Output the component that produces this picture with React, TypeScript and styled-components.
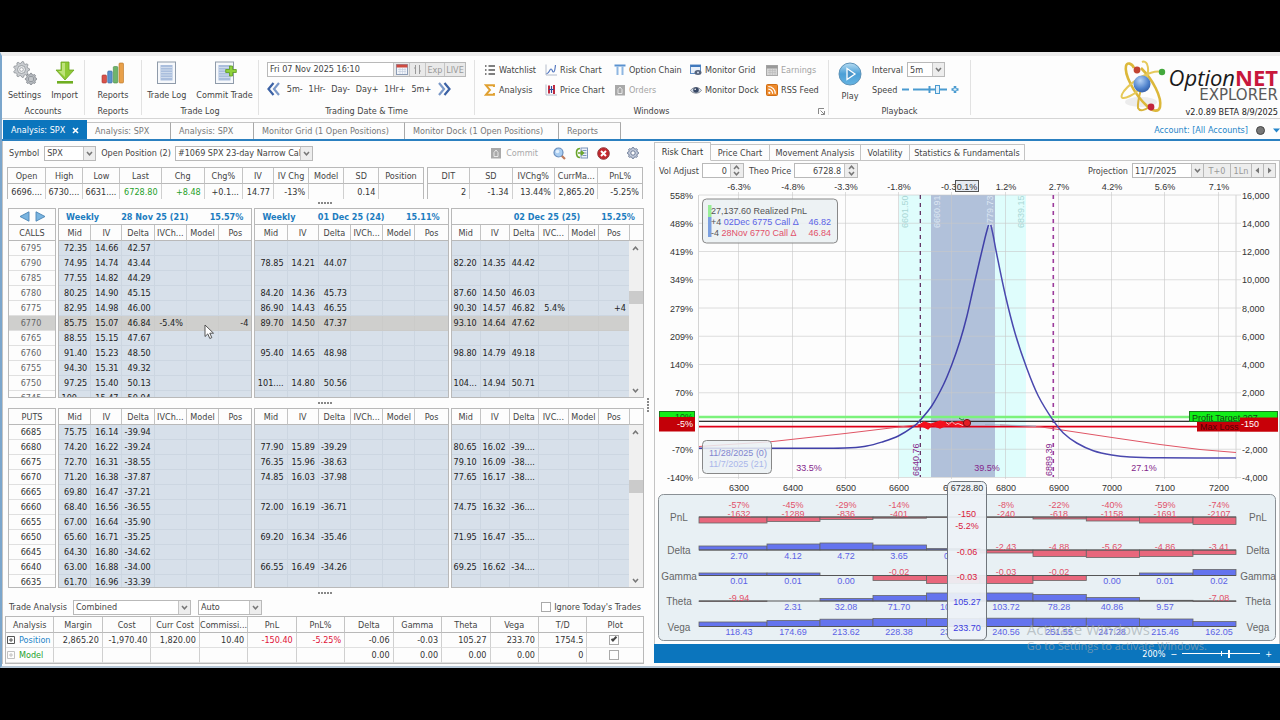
import React from "react";
import styled, { createGlobalStyle, css } from "styled-components";

const GlobalStyle = createGlobalStyle`
  *, *::before, *::after { box-sizing: border-box; }
  html, body { margin: 0; padding: 0; background: #000; }
  body, button, input, select, table {
    font-family: "DejaVu Sans Condensed", "DejaVu Sans", sans-serif;
    font-size: 9px;
    line-height: 14px;
    color: #444;
  }
  button { border: 0; padding: 0; margin: 0; background: none; cursor: default; }
  svg { display: block; flex: none; }
  a { text-decoration: none; }
`;

const LINE = "#b9b9b9";
const BLUE = "#0b75bd";

/* ---------- window frame ---------- */

const Screen = styled.div`
  min-height: 100vh;
  padding: 52px 0;
  background: #000;
`;

const Window = styled.div`
  background: #fdfdfd;
  border-left: 2px solid #7ba6cc;
  border-top: 4px solid #ececec;
  border-bottom: 2px solid #b5c6d6;
  padding-bottom: 2px;
  overflow: hidden;
`;

/* ---------- ribbon ---------- */

const Ribbon = styled.header`
  display: flex;
  align-items: stretch;
  height: 63px;
  padding: 4px 0 3px;
  border-bottom: 1px solid #d5d5d5;
`;

const RibbonGroup = styled.section<{ $w: number }>`
  display: flex;
  flex-direction: column;
  justify-content: space-between;
  flex: 0 1 ${(p) => p.$w}px;
  border-right: 1px solid #e2e2e2;
  position: relative;
`;

const GroupCaption = styled.div`
  text-align: center;
  line-height: 12px;
  height: 10px;
`;

const BigButtons = styled.div`
  display: flex;
  justify-content: center;
  gap: 10px;
  padding-top: 1px;
`;

const BigButton = styled.button`
  display: flex;
  flex-direction: column;
  align-items: center;
  gap: 4px;
  white-space: nowrap;
  line-height: 12px;
`;

const DateArea = styled.div`
  padding: 2px 8px 0 8px;
`;

const DateRow = styled.div`
  display: flex;
  height: 15px;
  width: 199px;
  border: 1px solid ${LINE};
`;

const DateInput = styled.input`
  flex: 1;
  min-width: 0;
  border: 0;
  padding: 0 2px;
  background: #fff;
  line-height: 13px;
  outline: none;
`;

const DateButton = styled.button<{ $w: number }>`
  width: ${(p) => p.$w}px;
  display: flex;
  align-items: center;
  justify-content: center;
  border-left: 1px solid #c4c4c4;
  background: #e9e9e9;
  color: #999;
`;

const StepRow = styled.div`
  display: flex;
  align-items: center;
  justify-content: space-between;
  width: 184px;
  margin-top: 5px;
`;

const StepButton = styled.button`
  white-space: nowrap;
`;

const WindowGrid = styled.div`
  display: grid;
  grid-template-columns: 61px 69px 76px 76px 1fr;
  row-gap: 6px;
  padding: 3px 0 0 9px;
`;

const WindowButton = styled.button`
  display: flex;
  align-items: center;
  gap: 3px;
  white-space: nowrap;
  &:disabled { color: #a4a4a4; }
`;

const Launcher = styled.button`
  position: absolute;
  right: 3px;
  bottom: 0;
`;

const PlaybackRow = styled.div`
  display: flex;
  gap: 10px;
  padding: 2px 0 0 9px;
`;

const PlaybackFields = styled.div`
  display: flex;
  flex-direction: column;
  gap: 5px;
`;

const FieldRow = styled.div`
  display: flex;
  align-items: center;
  gap: 4px;
  height: 15px;
`;

const SpeedTrack = styled.div`
  position: relative;
  width: 58px;
  height: 11px;
`;

const HiddenRange = styled.input`
  position: absolute;
  inset: 0;
  width: 100%;
  height: 100%;
  margin: 0;
  opacity: 0;
`;

const Brand = styled.div`
  margin-left: auto;
  display: flex;
  align-items: flex-start;
  gap: 2px;
  padding-right: 2px;
`;

const BrandText = styled.div`
  display: flex;
  flex-direction: column;
  align-items: flex-end;
`;

const BrandName = styled.div`
  font-family: "Open Sans", "Noto Sans", sans-serif;
  font-size: 22px;
  line-height: 26px;
  font-style: italic;
  color: #1a1a1a;
  padding-top: 4px;
  b { font-style: normal; color: #c8173c; }
`;

const BrandSub = styled.div`
  font-family: "DejaVu Sans", sans-serif;
  font-size: 15px;
  line-height: 11px;
  color: #5a5a5a;
`;

const BrandVersion = styled.div`
  font-size: 9px;
  line-height: 14px;
  padding-top: 4px;
  color: #222;
`;

/* ---------- document tabs ---------- */

const TabBar = styled.nav`
  display: flex;
  align-items: flex-end;
  height: 22px;
  padding-left: 1px;
  border-bottom: 2px solid #2b80c0;
`;

const DocTab = styled.button<{ $w: number; $active?: boolean }>`
  display: flex;
  align-items: center;
  justify-content: space-between;
  width: ${(p) => p.$w}px;
  height: 17px;
  padding: 0 7px 0 8px;
  border-top: 1px solid #c4c4c4;
  border-right: 1px solid #a8a8a8;
  color: #777;
  white-space: nowrap;
  ${(p) =>
    p.$active &&
    css`
      height: 19px;
      background: ${BLUE};
      border-color: ${BLUE};
      color: #fff;
    `}
`;

const Account = styled.div`
  margin-left: auto;
  height: 18px;
  display: flex;
  align-items: center;
  gap: 8px;
  a { color: #2585c9; }
`;

const StatusDot = styled.span`
  width: 9px;
  height: 9px;
  border-radius: 50%;
  background: #777;
  border: 1px solid #444;
`;

/* ---------- main split ---------- */

const Main = styled.main`
  display: grid;
  grid-template-columns: minmax(0, 652fr) minmax(0, 626fr);
`;

const LeftPane = styled.section`
  position: relative;
  border-left: 1px solid #c4c4c4;
  padding: 3px 10px 0 2px;
`;

const Bar = styled.div<{ $h: number }>`
  display: flex;
  align-items: center;
  height: ${(p) => p.$h}px;
  padding-left: 4px;
  white-space: nowrap;
`;

const Push = styled.div<{ $gap?: number }>`
  margin-left: auto;
  display: flex;
  align-items: center;
  gap: ${(p) => p.$gap ?? 9}px;
`;

const CommitButton = styled.button`
  display: flex;
  align-items: center;
  gap: 4px;
  margin-right: 6px;
  &:disabled { color: #aaa; }
`;

const GearButton = styled.button`
  margin: 0 5px 0 8px;
`;

const SelectBox = styled.span<{ $w: number; $ml?: number }>`
  position: relative;
  display: flex;
  width: ${(p) => p.$w}px;
  height: 15px;
  margin-left: ${(p) => p.$ml ?? 0}px;
  border: 1px solid ${LINE};
  background: #fff;
  select {
    appearance: none;
    flex: 1;
    min-width: 0;
    border: 0;
    padding: 0 12px 0 2px;
    background: transparent;
    line-height: 12px;
    outline: none;
  }
`;

const DropMark = styled.span`
  position: absolute;
  right: 0;
  top: 0;
  width: 12px;
  height: 13px;
  display: flex;
  align-items: center;
  justify-content: center;
  background: #ededed;
  border-left: 1px solid #c4c4c4;
  pointer-events: none;
`;

const Label = styled.label<{ $ml?: number }>`
  margin-left: ${(p) => p.$ml ?? 0}px;
  white-space: nowrap;
`;

const Grip = styled.div<{ $h: number }>`
  height: ${(p) => p.$h}px;
  display: flex;
  align-items: center;
  justify-content: center;
  gap: 1px;
  span { width: 2px; height: 2px; background: #888; }
`;

const SideGrip = styled.div`
  position: absolute;
  right: 5px;
  top: 257px;
  display: flex;
  flex-direction: column;
  gap: 1px;
  span { width: 2px; height: 2px; background: #888; }
`;

/* ---------- tables ---------- */

const Table = styled.table`
  width: 100%;
  table-layout: fixed;
  border-collapse: separate;
  border-spacing: 0;
`;

const Th = styled.th`
  height: 16px;
  padding: 0;
  font-weight: normal;
  text-align: center;
  border-right: 1px solid #c4c4c4;
  border-bottom: 1px solid ${LINE};
  background: #fdfdfd;
  white-space: nowrap;
  overflow: hidden;
  &:last-child { border-right: 0; }
`;

const Td = styled.td<{ $tone?: string; $line?: string; $center?: boolean }>`
  height: 15px;
  padding: 0 3px 0 1px;
  line-height: 14px;
  text-align: ${(p) => (p.$center ? "center" : "right")};
  color: ${(p) => p.$tone ?? "#333"};
  border-right: 1px solid ${(p) => p.$line ?? "#d0d0d0"};
  border-bottom: 1px solid ${(p) => p.$line ?? "#e0e0e0"};
  white-space: nowrap;
  overflow: hidden;
  &:last-child { border-right: 0; }
`;

const QuoteRow = styled.div`
  display: grid;
  grid-template-columns: minmax(0, 416fr) minmax(0, 216fr);
  gap: 3px;
  height: 31px;
  margin: 5px 1px 0 2px;
`;

const QuoteBox = styled.div`
  border: 1px solid ${LINE};
  border-bottom: 0;
  ${Td} { border-bottom: 0; }
`;

const ChainGrid = styled.div<{ $h: number }>`
  position: relative;
  display: grid;
  grid-template-columns: minmax(0, 48fr) minmax(0, 194fr) minmax(0, 194fr) minmax(0, 193fr);
  gap: 2px;
  height: ${(p) => p.$h}px;
  margin-left: 3px;
`;

const ChainBox = styled.div`
  border: 1px solid ${LINE};
  overflow: hidden;
`;

const ChainTitle = styled.div`
  display: flex;
  justify-content: space-between;
  align-items: center;
  height: 16px;
  padding: 0 8px 0 7px;
  border-bottom: 1px solid ${LINE};
  font-weight: bold;
  color: #1c7cc0;
  white-space: nowrap;
  span:first-child { min-width: 34px; }
`;

const ArrowPair = styled.div`
  display: flex;
  align-items: center;
  justify-content: center;
  gap: 5px;
  height: 16px;
  border-bottom: 1px solid ${LINE};
`;

const ChainBody = styled.div`
  display: flex;
  align-items: flex-start;
`;

const ChainRow = styled.tr<{ $hot?: boolean }>`
  background: ${(p) => (p.$hot ? "#cfcfcd" : "#d7e0ea")};
`;

const StrikeRow = styled.tr<{ $hot?: boolean }>`
  background: ${(p) => (p.$hot ? "#cfcfcd" : "#fdfdfd")};
`;

const ScrollColumn = styled.div`
  flex: 0 0 14px;
  display: flex;
  flex-direction: column;
`;

const ScrollHead = styled.div`
  height: 16px;
  border-left: 1px solid #c4c4c4;
  border-bottom: 1px solid ${LINE};
`;

const ScrollTrack = styled.div<{ $h: number }>`
  height: ${(p) => p.$h}px;
  display: flex;
  flex-direction: column;
  align-items: center;
  justify-content: space-between;
  padding: 5px 0 4px;
  background: #f0f0f0;
  position: relative;
`;

const ScrollThumb = styled.div<{ $top: number }>`
  position: absolute;
  left: 0;
  right: 0;
  top: ${(p) => p.$top}%;
  height: 13px;
  background: #cbcbcb;
`;

const PointerMark = styled.div`
  position: absolute;
  left: 196px;
  top: 116px;
`;

const CheckLabel = styled.label`
  display: flex;
  align-items: center;
  gap: 3px;
  margin-right: 3px;
`;

const Check = styled.input`
  appearance: none;
  display: block;
  width: 10px;
  height: 10px;
  margin: 0 auto;
  border: 1px solid #aaa;
  background: #fff;
  position: relative;
  &:checked::after {
    content: "";
    position: absolute;
    left: 1px;
    top: 1px;
    width: 6px;
    height: 3px;
    border-left: 2px solid #444;
    border-bottom: 2px solid #444;
    transform: rotate(-45deg);
  }
`;

const AnalysisBox = styled.div`
  border: 1px solid ${LINE};
`;

const NameCell = styled.span<{ $dim?: boolean }>`
  display: flex;
  align-items: center;
  gap: 4px;
  svg { opacity: ${(p) => (p.$dim ? 0.35 : 1)}; }
`;

/* ---------- right pane ---------- */

const RightPane = styled.section`
  position: relative;
  padding-top: 1px;
`;

const PaneTabs = styled.nav`
  display: flex;
  align-items: flex-end;
  height: 19px;
`;

const PaneTab = styled.button<{ $w: number; $active?: boolean }>`
  width: ${(p) => p.$w}px;
  height: ${(p) => (p.$active ? 19 : 17)}px;
  border: 1px solid #c4c4c4;
  border-left-width: ${(p) => (p.$active ? 1 : 0)}px;
  border-bottom-color: ${(p) => (p.$active ? "#fdfdfd" : "#c4c4c4")};
  background: #fdfdfd;
  color: ${(p) => (p.$active ? "#333" : "#444")};
  white-space: nowrap;
`;

const TabFill = styled.div`
  flex: 1;
  border-bottom: 1px solid #c4c4c4;
`;

const PaneBody = styled.div`
  border-left: 1px solid #c4c4c4;
  border-right: 1px solid #c4c4c4;
`;

const SpinBox = styled.span<{ $w: number; $ml: number }>`
  display: flex;
  width: ${(p) => p.$w}px;
  height: 15px;
  margin-left: ${(p) => p.$ml}px;
  border: 1px solid ${LINE};
  input {
    flex: 1;
    min-width: 0;
    border: 0;
    padding: 0 3px;
    text-align: right;
    line-height: 12px;
    background: #fff;
    outline: none;
  }
`;

const SpinButtons = styled.span`
  display: flex;
  flex-direction: column;
  justify-content: space-around;
  align-items: center;
  width: 13px;
  background: #ededed;
  border-left: 1px solid #c4c4c4;
`;

const ProjectionBox = styled.span`
  display: flex;
  margin-right: 3px;
`;

const SmallButton = styled.button<{ $w: number }>`
  display: flex;
  align-items: center;
  justify-content: center;
  width: ${(p) => p.$w}px;
  height: 15px;
  border: 1px solid ${LINE};
  border-left: 0;
  background: #ededed;
  color: #999;
`;

const Chart = styled.svg`
  width: 100%;
  height: auto;
  font-family: "Liberation Sans", Arial, sans-serif;
  font-size: 9px;
`;

const ZoomBar = styled.footer`
  display: flex;
  align-items: center;
  justify-content: flex-end;
  gap: 5px;
  height: 19px;
  padding-right: 8px;
  background: ${BLUE};
  color: #fff;
  button { color: #fff; }
`;

const ZoomRange = styled.input`
  appearance: none;
  width: 78px;
  height: 9px;
  margin: 0;
  background: linear-gradient(#fff, #fff) center / 100% 1px no-repeat,
    linear-gradient(#fff, #fff) center / 1px 5px no-repeat;
  &::-webkit-slider-thumb {
    appearance: none;
    width: 2px;
    height: 8px;
    background: #fff;
  }
`;

const Watermark = styled.div`
  position: absolute;
  right: 73px;
  bottom: 10px;
  font-family: "Open Sans", "Noto Sans", sans-serif;
  font-size: 11px;
  line-height: 16px;
  color: rgba(160, 170, 175, 0.65);
  pointer-events: none;
  strong { display: block; font-weight: normal; font-size: 15px; line-height: 17px; }
`;

/* ---------- icons ---------- */

const Chevron = ({ up = false }: { up?: boolean }) => (
  <svg width="7" height="5" viewBox="0 0 7 5" fill="none" stroke="#777" strokeWidth="1.5">
    <path d={up ? "M1 4 3.5 1.2 6 4" : "M1 1 3.5 3.8 6 1"} />
  </svg>
);

const gearPath = (cx: number, cy: number, r: number, n: number) => {
  const pts: string[] = [];
  for (let i = 0; i < n * 4; i++) {
    const a = ((i - 0.5) / (n * 4)) * Math.PI * 2;
    const rad = i % 4 < 2 ? r : r * 0.78;
    pts.push(`${(cx + Math.cos(a) * rad).toFixed(2)} ${(cy + Math.sin(a) * rad).toFixed(2)}`);
  }
  return `M${pts.join("L")}Z`;
};

const GearsIcon = () => (
  <svg width="24" height="24" viewBox="0 0 24 24">
    <path d={gearPath(8.5, 8.5, 8, 9)} fill="#c9ccd0" stroke="#8c9096" strokeWidth=".8" />
    <circle cx="8.5" cy="8.5" r="4" fill="#e6e8ea" stroke="#8c9096" strokeWidth=".8" />
    <circle cx="8.5" cy="8.5" r="1.8" fill="#fff" stroke="#8c9096" strokeWidth=".7" />
    <path d={gearPath(18, 18, 5.7, 8)} fill="#b9bdc2" stroke="#777c83" strokeWidth=".8" />
    <circle cx="18" cy="18" r="2.7" fill="#dcdfe2" stroke="#777c83" strokeWidth=".7" />
    <circle cx="18" cy="18" r="1.2" fill="#fff" stroke="#777c83" strokeWidth=".6" />
  </svg>
);

const ImportIcon = () => (
  <svg width="20" height="24" viewBox="0 0 20 24">
    <path d="M6 1h8v8h5l-9 10L1 9h5z" fill="#8fc936" stroke="#6ba31f" strokeWidth=".8" />
    <path d="M7 2h3v14L3.4 10H7z" fill="#bfe37b" />
    <rect x="2" y="20" width="16" height="2.6" fill="#6fae22" />
  </svg>
);

const BarsIcon = () => (
  <svg width="24" height="24" viewBox="0 0 24 24">
    <rect x="1" y="14" width="4.5" height="8" rx="1" fill="#d9534c" stroke="#a9322c" strokeWidth=".6" />
    <rect x="6.7" y="10" width="4.5" height="12" rx="1" fill="#5a93cf" stroke="#34659b" strokeWidth=".6" />
    <rect x="12.3" y="5.5" width="4.5" height="16.5" rx="1" fill="#6fb46c" stroke="#458a45" strokeWidth=".6" />
    <rect x="18" y="2" width="4.5" height="20" rx="1" fill="#e8a04a" stroke="#b87420" strokeWidth=".6" />
  </svg>
);

const LogIcon = ({ plus = false }: { plus?: boolean }) => (
  <svg width="24" height="24" viewBox="0 0 24 24">
    <rect x="2.5" y="1" width="18" height="21.5" fill="#f6f8fb" stroke="#8f9baa" />
    <rect x="5.5" y="4" width="12" height="15.5" fill="#aabedd" />
    <path d="M6 6.5h11M6 9h11M6 11.5h11M6 14h11M6 16.5h11" stroke="#d8e2f0" strokeWidth=".8" />
    {plus && (
      <path
        d="M16.5 5h3v3.500h3.800v3h-3.800V15h-3v-3.500h-3.800v-3h3.800z"
        fill="#8fd13c"
        stroke="#5c9c1c"
        strokeWidth=".8"
      />
    )}
  </svg>
);

const CalendarIcon = ({ muted = false }: { muted?: boolean }) => (
  <svg width="12" height="11" viewBox="0 0 12 11">
    <rect x=".5" y=".5" width="11" height="10" fill={muted ? "#d6d6d6" : "#f2f5fa"} stroke={muted ? "#aaa" : "#8d9db5"} />
    <rect x=".5" y=".5" width="11" height="3" fill={muted ? "#999" : "#cf4b40"} />
    <path d="M2 5.500h8M2 7.500h8M4 4v6M6.500 4v6M9 4v6" stroke={muted ? "#bbb" : "#c0cbdc"} strokeWidth=".6" />
  </svg>
);

const DoubleArrow = ({ right = false }: { right?: boolean }) => (
  <svg width="14" height="14" viewBox="0 0 14 14" fill="none" strokeWidth="2.200" transform={right ? "scale(-1 1)" : undefined}>
    <path d="M6.500 1 1.500 7l5 6" stroke="#3c62a5" />
    <path d="M12 1 7 7l5 6" stroke="#7a98c8" />
  </svg>
);

const WinIcon = ({ kind }: { kind: string }) => (
  <svg width="12" height="12" viewBox="0 0 12 12" fill="none">
    {kind === "list" && (
      <path d="M1 2h1.500M1 6h1.500M1 10h1.500M4.500 2H11M4.500 6H11M4.500 10H11" stroke="#555" strokeWidth="1.300" />
    )}
    {kind === "sigma" && <path d="M10 3V1.200H1.800L6 6l-4.200 4.800H10V9" stroke="#e0a030" strokeWidth="1.900" />}
    {kind === "risk" && (
      <>
        <path d="M1 .5v10.500h11" stroke="#b4bccb" />
        <path d="M1.500 9.500C4 10 4.500 5 6 5s1 3 2.500 3S10 4 10.500 1" stroke="#5478c0" strokeWidth="1.200" />
      </>
    )}
    {kind === "price" && (
      <>
        <path d="M1 .5v10.500h11" stroke="#b4bccb" />
        <path d="M4 1.500v8M9 1v9" stroke="#c02a40" strokeWidth="2" />
        <path d="M6.500 2v7M4 5.500h5" stroke="#2c4b9a" strokeWidth="1.200" />
      </>
    )}
    {kind === "chain" && (
      <>
        <path d="M.5 1.500h11" stroke="#5a92d0" strokeWidth="2" />
        <path d="M3.500 2.500V11M8.500 2.500V11" stroke="#8fb7e2" strokeWidth="2" />
      </>
    )}
    {kind === "orders" && (
      <>
        <rect x="1" y="1" width="10" height="10.500" fill="#a9a9a9" />
        <path d="M4 5.500 6 3l2 2.500M4 5.500v4h4v-4" stroke="#e8e8e8" />
      </>
    )}
    {kind === "grid" && (
      <>
        <rect x=".5" y="1" width="10" height="8.500" fill="#e8f0fa" stroke="#5d8cc5" />
        <path d="M.5 2h10" stroke="#3f78bd" strokeWidth="2" />
        <ellipse cx="8" cy="8.500" rx="3.500" ry="2.500" fill="#56647c" />
        <circle cx="8" cy="8.500" r="1" fill="#dbe5f5" />
      </>
    )}
    {kind === "eye" && (
      <>
        <path d="M.5 6.500C3 2.500 9 2.500 11.500 6.500 9 10 3 10 .5 6.500z" fill="#d5dce8" stroke="#8a8f99" />
        <circle cx="6" cy="6" r="2.800" fill="#394966" />
        <circle cx="5.200" cy="5.200" r=".8" fill="#fff" />
      </>
    )}
    {kind === "rss" && (
      <>
        <rect x=".5" y=".5" width="11" height="11" rx="1" fill="#ee8b2d" stroke="#cf6d14" />
        <circle cx="3.300" cy="8.800" r="1.100" fill="#fff" />
        <path d="M2.300 5.200a4.300 4.300 0 0 1 4.300 4.500M2.300 2.500a7 7 0 0 1 7 7.200" stroke="#fff" strokeWidth="1.200" />
      </>
    )}
  </svg>
);

const PlayIcon = () => (
  <svg width="24" height="24" viewBox="0 0 24 24">
    <defs>
      <linearGradient id="play" x1="0" y1="0" x2="0" y2="1">
        <stop offset="0" stopColor="#b5dcf3" />
        <stop offset=".5" stopColor="#4b9fd6" />
        <stop offset="1" stopColor="#66b4e2" />
      </linearGradient>
    </defs>
    <circle cx="12" cy="12" r="11" fill="url(#play)" stroke="#5f93b8" />
    <path d="M9 6.500 17 12l-8 5.500z" fill="#4a94c8" stroke="#fff" strokeWidth="1.300" />
  </svg>
);

const LogoIcon = () => (
  <svg width="48" height="54" viewBox="0 0 48 54" fill="none">
    <defs>
      <radialGradient id="core" cx=".4" cy=".3" r=".8">
        <stop offset="0" stopColor="#b5d2f5" />
        <stop offset=".6" stopColor="#4f82cc" />
        <stop offset="1" stopColor="#2a5299" />
      </radialGradient>
    </defs>
    <ellipse cx="22" cy="42" rx="16" ry="5" fill="#ececec" />
    <path
      d="M15 8C13 3 8 2 7 6c-2 8 8 28 21 40 6 6 12 6 13 1C43 37 34 20 22 8"
      stroke="#dcb83a"
      strokeWidth="2.600"
    />
    <path d="M43 12C33 9 14 20 5 31c-5 7-2 9 6 5C24 30 32 14 28 4c-1-2-3-3-5-2" stroke="#e6c95a" strokeWidth="2" />
    <path d="M24 20C22 30 18 42 19 48c2 4 7 2 11-1" stroke="#d8b43c" strokeWidth="2" />
    <circle cx="23" cy="24" r="8.500" fill="url(#core)" />
    <circle cx="18" cy="10" r="3.400" fill="#c24432" />
    <circle cx="43" cy="12" r="3.200" fill="#43a83c" />
    <circle cx="32" cy="47" r="3.400" fill="#c2263c" />
  </svg>
);

const TriIcon = ({ dir, fill = "#777" }: { dir: "left" | "right" | "down"; fill?: string }) => (
  <svg width="7" height="7" viewBox="0 0 7 7">
    <path d={{ left: "M5 .5v6L1.500 3.500z", right: "M2 .5v6l3.500-3z", down: "M0 1.500h7L3.500 5.500z" }[dir]} fill={fill} />
  </svg>
);

const NavArrow = ({ right = false }: { right?: boolean }) => (
  <svg width="11" height="11" viewBox="0 0 11 11">
    <path d={right ? "M1 .8 10 5.500 1 10.200z" : "M10 .8 1 5.500l9 4.700z"} fill="#79b4e0" stroke="#4c84b4" strokeWidth=".9" />
  </svg>
);

const SearchIcon = () => (
  <svg width="13" height="13" viewBox="0 0 13 13">
    <path d="m8.500 8.500 3.500 3.500" stroke="#c07b5b" strokeWidth="2.200" />
    <circle cx="5.500" cy="5.500" r="4.500" fill="#a9cdf1" stroke="#6a8fbd" strokeWidth="1.200" />
    <circle cx="4.500" cy="4.500" r="1.800" fill="#e2f0fd" />
  </svg>
);

const SwapIcon = () => (
  <svg width="13" height="12" viewBox="0 0 13 12" fill="none">
    <rect x="6" y="1" width="6.500" height="10" fill="#eef3fa" stroke="#7d95bb" />
    <path d="M7.500 3.500h4M7.500 6h4M7.500 8.500h4" stroke="#7d95bb" />
    <path d="M5 1.500C1.500 1.500 1.500 4 1.500 6s0 4.500 3.500 4.500M3 6h5M6 3.800 8.300 6 6 8.200" stroke="#6aa52c" strokeWidth="1.600" />
  </svg>
);

const CloseIcon = () => (
  <svg width="13" height="13" viewBox="0 0 13 13">
    <circle cx="6.500" cy="6.500" r="5.800" fill="#c3272d" stroke="#8f3a3c" />
    <path d="m4 4 5 5M9 4l-5 5" stroke="#fff" strokeWidth="2" />
  </svg>
);

const GearIcon = () => (
  <svg width="12" height="12" viewBox="0 0 12 12">
    <path d={gearPath(6, 6, 5.6, 8)} fill="#c3cbdb" stroke="#5f6e8c" strokeWidth=".9" />
    <circle cx="6" cy="6" r="2.200" fill="#fff" stroke="#5f6e8c" strokeWidth=".9" />
  </svg>
);

const PlusBox = () => (
  <svg width="8" height="8" viewBox="0 0 8 8" fill="none" stroke="#555">
    <path d="M.5.5h7v7h-7zM2 4h4M4 2v4" />
  </svg>
);

const Cursor = () => (
  <svg width="10" height="16" viewBox="0 0 10 16">
    <path d="M1 1v11.500l2.800-2.600 2 4.600 2-.9-2-4.400H9.500z" fill="#fff" stroke="#444" strokeWidth=".9" />
  </svg>
);

const Dots = () => (
  <>
    {[0, 1, 2, 3, 4].map((i) => (
      <span key={i} />
    ))}
  </>
);

/* ---------- left pane data ---------- */

type Chain = (string[] | null)[];

const callStrikes = ["6795", "6790", "6785", "6780", "6775", "6770", "6765", "6760", "6755", "6750", "6745"];
const calls: Chain[] = [
  [
    ["72.35", "14.66", "42.57"], ["74.95", "14.74", "43.44"], ["77.55", "14.82", "44.29"],
    ["80.25", "14.90", "45.15"], ["82.95", "14.98", "46.00"], ["85.75", "15.07", "46.84", "-5.4%", "", "-4"],
    ["88.55", "15.15", "47.67"], ["91.40", "15.23", "48.50"], ["94.30", "15.31", "49.32"],
    ["97.25", "15.40", "50.13"], ["100....", "15.47", "50.94"],
  ],
  [
    null, ["78.85", "14.21", "44.07"], null, ["84.20", "14.36", "45.73"], ["86.90", "14.43", "46.55"],
    ["89.70", "14.50", "47.37"], null, ["95.40", "14.65", "48.98"], null, ["101....", "14.80", "50.56"], null,
  ],
  [
    null, ["82.20", "14.35", "44.42"], null, ["87.60", "14.50", "46.03"],
    ["90.30", "14.57", "46.82", "5.4%", "", "+4"], ["93.10", "14.64", "47.62"], null,
    ["98.80", "14.79", "49.18"], null, ["104...", "14.94", "50.71"], null,
  ],
];

const putStrikes = ["6685", "6680", "6675", "6670", "6665", "6660", "6655", "6650", "6645", "6640", "6635"];
const puts: Chain[] = [
  [
    ["75.75", "16.14", "-39.94"], ["74.20", "16.22", "-39.24"], ["72.70", "16.31", "-38.55"],
    ["71.20", "16.38", "-37.87"], ["69.80", "16.47", "-37.21"], ["68.40", "16.56", "-36.55"],
    ["67.00", "16.64", "-35.90"], ["65.60", "16.71", "-35.25"], ["64.30", "16.80", "-34.62"],
    ["63.00", "16.88", "-34.00"], ["61.70", "16.96", "-33.39"],
  ],
  [
    null, ["77.90", "15.89", "-39.29"], ["76.35", "15.96", "-38.63"], ["74.85", "16.03", "-37.98"], null,
    ["72.00", "16.19", "-36.71"], null, ["69.20", "16.34", "-35.46"], null, ["66.55", "16.49", "-34.26"], null,
  ],
  [
    null, ["80.65", "16.02", "-39...."], ["79.10", "16.09", "-38...."], ["77.65", "16.17", "-38...."], null,
    ["74.75", "16.32", "-36...."], null, ["71.95", "16.47", "-35...."], null, ["69.25", "16.62", "-34...."], null,
  ],
];

const titles = [
  ["Weekly", "28 Nov 25 (21)", "15.57%"],
  ["Weekly", "01 Dec 25 (24)", "15.11%"],
  ["", "02 Dec 25 (25)", "15.25%"],
];

const ChainTable = ({ rows, hot, narrow }: { rows: Chain; hot?: number; narrow?: boolean }) => (
  <Table>
    <colgroup>
      {(narrow ? [29, 29, 29, 30, 30, 30] : [32, 31, 32, 32, 32, 32]).map((w, i) => (
        <col key={i} style={{ width: w }} />
      ))}
    </colgroup>
    <thead>
      <tr>
        {["Mid", "IV", "Delta", narrow ? "IVC..." : "IVCh...", "Model", "Pos"].map((h) => (
          <Th key={h}>{h}</Th>
        ))}
      </tr>
    </thead>
    <tbody>
      {rows.map((r, i) => (
        <ChainRow key={i} $hot={i === hot}>
          {[0, 1, 2, 3, 4, 5].map((c) => (
            <Td key={c} $tone="#222" $line={i === hot ? "#cbcbc9" : "#ccd6e1"}>
              {r?.[c] ?? ""}
            </Td>
          ))}
        </ChainRow>
      ))}
    </tbody>
  </Table>
);

const OptionChain = (p: {
  name: string; strikes: string[]; groups: Chain[]; hot?: number; height: number; titled?: boolean; thumb: number;
}) => (
  <ChainGrid $h={p.height}>
    <ChainBox>
      {p.titled && (
        <ArrowPair>
          <button aria-label="Previous expiries"><NavArrow /></button>
          <button aria-label="Next expiries"><NavArrow right /></button>
        </ArrowPair>
      )}
      <Table>
        <thead>
          <tr><Th>{p.name}</Th></tr>
        </thead>
        <tbody>
          {p.strikes.map((s, i) => (
            <StrikeRow key={s} $hot={i === p.hot}>
              <Td $center $tone={p.titled ? "#666" : "#333"}>{s}</Td>
            </StrikeRow>
          ))}
        </tbody>
      </Table>
    </ChainBox>
    {p.groups.map((g, i) => (
      <ChainBox key={i}>
        {p.titled && (
          <ChainTitle>
            {titles[i].map((t, n) => (
              <span key={n}>{t}</span>
            ))}
          </ChainTitle>
        )}
        <ChainBody>
          <ChainTable rows={g} hot={p.hot} narrow={i === 2} />
          {i === 2 && (
            <ScrollColumn>
              <ScrollHead />
              <ScrollTrack $h={p.titled ? 156 : 162}>
                <Chevron up />
                <ScrollThumb $top={p.thumb} />
                <Chevron />
              </ScrollTrack>
            </ScrollColumn>
          )}
        </ChainBody>
      </ChainBox>
    ))}
    {p.titled && <PointerMark><Cursor /></PointerMark>}
  </ChainGrid>
);

const Select = ({ id, w, ml, value }: { id: string; w: number; ml?: number; value: string }) => (
  <SelectBox $w={w} $ml={ml}>
    <select id={id} aria-label={id} defaultValue={value}>
      <option>{value}</option>
    </select>
    <DropMark><Chevron /></DropMark>
  </SelectBox>
);

const QuoteTable = ({ heads, cells, widths }: { heads: string[]; cells: string[]; widths: number[] }) => (
  <QuoteBox>
    <Table>
      <colgroup>
        {widths.map((w, i) => (
          <col key={i} style={{ width: w }} />
        ))}
      </colgroup>
      <thead>
        <tr>{heads.map((h) => <Th key={h}>{h}</Th>)}</tr>
      </thead>
      <tbody>
        <tr>
          {cells.map((c, i) => (
            <Td key={i} $tone={c === "6728.80" || c === "+8.48" ? "#1fa02a" : undefined}>{c}</Td>
          ))}
        </tr>
      </tbody>
    </Table>
  </QuoteBox>
);

/* ---------- chart ---------- */

type Pt = [number, number];

const smooth = (p: Pt[]) => {
  let d = `M${p[0][0]} ${p[0][1]}`;
  for (let i = 0; i < p.length - 1; i++) {
    const a = p[Math.max(i - 1, 0)];
    const b = p[i];
    const c = p[i + 1];
    const e = p[Math.min(i + 2, p.length - 1)];
    d += `C${b[0] + (c[0] - a[0]) / 6} ${b[1] + (c[1] - a[1]) / 6} ${c[0] - (e[0] - b[0]) / 6} ${c[1] - (e[1] - b[1]) / 6} ${c[0]} ${c[1]}`;
  }
  return d;
};

const riseCurve: Pt[] = [
  [699, 448.3], [780, 448.3], [845, 448], [866.7, 446], [883, 441.7], [898.3, 436], [913.3, 426.7], [920.3, 420],
  [931.7, 406], [943.3, 385], [951.7, 365], [960, 341], [966.7, 317], [973.3, 288], [980, 259], [985, 238], [988.5, 225],
];
const fallCurve: Pt[] = [
  [990.8, 225], [993.3, 236], [996.7, 254], [1005.3, 295], [1015, 333], [1026.7, 368], [1038.3, 396], [1053.3, 420.7],
  [1063.3, 433], [1076.7, 443], [1093.3, 450.7], [1111.7, 455], [1130, 457], [1160, 457.8], [1236, 458],
];

const strikesX = [6300, 6400, 6500, 6600, 6700, 6800, 6900, 7000, 7100, 7200];
const px = (strike: number) => Math.round(739.3 + (strike - 6300) * 0.5325);
const rowY = (i: number) => 195 + i * 28.25;
const pctTop = ["-6.3%", "-4.8%", "-3.3%", "-1.8%", "", "1.2%", "2.7%", "4.2%", "5.6%", "7.1%"];
const pctLeft = ["558%", "489%", "419%", "349%", "279%", "209%", "140%", "70%", "", "-70%", "-140%"];
const usdRight = ["16,000", "14,000", "12,000", "10,000", "8,000", "6,000", "4,000", "2,000", "", "-2,000", "-4,000"];
const edges = [699, 767, 820, 873, 926.5, 980, 1033, 1086.3, 1139.5, 1193, 1236];

const greeks: { name: string; base: number; bars: number[]; text: string[] }[] = [
  { name: "PnL", base: 517, bars: [6, 4.5, 2.5, 1.2, 0.5, 0.5, 2, 4, 6, 7.5],
    text: ["-1632", "-1289", "-836", "-401", "", "-240", "-618", "-1158", "-1691", "-2107"] },
  { name: "Delta", base: 550, bars: [-4, -6, -7, -5, -1.5, 3, 6.5, 7.5, 6.5, 4.5],
    text: ["2.70", "4.12", "4.72", "3.65", "", "-2.43", "-4.88", "-5.62", "-4.86", "-3.41"] },
  { name: "Gamma", base: 575.5, bars: [-2.5, -2.5, 0, 5, 8, 8, 5, 0, -2.5, -6],
    text: ["0.01", "0.01", "0.00", "-0.02", "", "-0.03", "-0.02", "0.00", "0.01", "0.02"] },
  { name: "Theta", base: 601, bars: [0.5, 0, -2.5, -5.5, -8, -8, -6.5, -3.5, -0.7, 0.5],
    text: ["-9.94", "2.31", "32.08", "71.70", "", "103.72", "78.28", "40.86", "9.57", "-7.08"] },
  { name: "Vega", base: 626.5, bars: [-4.5, -6, -7.3, -8, -8, -8.3, -8.3, -8.3, -7.5, -5],
    text: ["118.43", "174.69", "213.62", "228.38", "", "240.56", "251.55", "247.28", "215.46", "162.05"] },
];
const pnlPct = ["-57%", "-45%", "-29%", "-14%", "", "-8%", "-22%", "-40%", "-59%", "-74%"];

const RED = "#e2506a";
const INDIGO = "#5b62e6";

const VText = ({ x, y, fill, children }: { x: number; y: number; fill: string; children: string }) => (
  <text transform={`translate(${x} ${y}) rotate(-90)`} fill={fill}>{children}</text>
);

const RiskChart = () => (
  <Chart viewBox="655 180 624 464" role="img" aria-label="Risk chart">
    <rect x="899" y="195" width="127" height="282" fill="#dffdfc" />
    <rect x="931" y="195" width="64" height="282" fill="#b1c1da" />
    {usdRight.map((_, i) => (
      <path key={i} d={`M699 ${rowY(i)}H1241`} stroke="#c8c8c8" strokeOpacity=".6" />
    ))}
    {strikesX.map((s) => (
      <path key={s} d={`M${px(s) - 0.5} 192V479`} stroke="#c8c8c8" strokeOpacity=".6" />
    ))}
    <path d="M698.500 195V479M1236 195V479" stroke="#d4d4d4" />

    <VText x={908} y={228} fill="#a9d6d4">6601.50</VText>
    <VText x={940} y={228} fill="#dce6f3">6660.91</VText>
    <VText x={993} y={228} fill="#dce6f3">6779.73</VText>
    <VText x={1024} y={228} fill="#a9d6d4">6839.15</VText>

    <path d="M920.300 195V477" stroke="#5a2358" strokeWidth="1.200" strokeDasharray="4 4" />
    <path d="M1053.300 195V477" stroke="#9b3b9b" strokeWidth="1.600" strokeDasharray="4 4" />

    <path d="M699 417H1190" stroke="#7bf27b" strokeWidth="2.500" />
    <path d="M699 421.300H1240" stroke="#333" strokeWidth="1.200" />
    <path d="M699 426.600H1240" stroke="#e00018" strokeWidth="1.700" />
    <path d="M699 446.500 771 441.700 845 433.500 899 427 920 424.500" stroke="#e05565" fill="none" />
    <path d="M1000 425 1040 426.800 1062 430 1112 437.500 1160 444.500 1200 449.500 1236 452.500" stroke="#e05565" fill="none" />
    <path d="M985 424.500 1036 426" stroke="#9fb4c8" />
    <path d="M918 426 924 422 931 424 940 421 950 423 960 421.500 967 423 960 427 947 425 940 428 932 425 928 429 922 426z" fill="#f3101c" stroke="#f3101c" strokeWidth="1.200" />
    <path d="m946 422.500 3 2 3-3 3 3 3-1 5 2" stroke="#f5c4c8" fill="none" />
    <path d="m959 418 3 2 2-1" stroke="#258a2b" fill="none" />
    <circle cx="967" cy="423" r="3.600" fill="#e31b23" stroke="#7a1015" />

    <path d={smooth(riseCurve)} fill="none" stroke="#4040a8" strokeWidth="1.500" />
    <path d={smooth(fallCurve)} fill="none" stroke="#4a48ae" strokeWidth="1.500" />

    <VText x={919} y={476} fill="#84268a">6640.76</VText>
    <VText x={1052} y={476} fill="#84268a">6889.39</VText>
    <g fill="#84268a" textAnchor="middle">
      <text x="809" y="471">33.5%</text>
      <text x="987" y="471">39.5%</text>
      <text x="1144" y="471">27.1%</text>
    </g>

    <g fill="#333">
      <g textAnchor="middle">
        {pctTop.map((t, i) => <text key={i} x={px(strikesX[i])} y="190">{t}</text>)}
        {strikesX.map((s) => s !== 6700 && <text key={s} x={px(s)} y="491">{s}</text>)}
      </g>
      <text x="941" y="190">-0.3</text>
      <text x="943" y="491">6</text>
      {pctLeft.map((t, i) => <text key={i} x="693" y={rowY(i) + 3.5} textAnchor="end">{t}</text>)}
      {usdRight.map((t, i) => <text key={i} x="1242" y={rowY(i) + 3.5}>{t}</text>)}
    </g>
    <rect x="955.500" y="180.500" width="23" height="11" fill="#e6ebf2" stroke="#555" />
    <text x="967" y="189.500" textAnchor="middle" fill="#333">0.1%</text>

    <rect x="659.500" y="411.500" width="35" height="10" fill="#12ee18" stroke="#1b7a1e" />
    <text x="693" y="420" textAnchor="end" fill="#145a17">10%</text>
    <rect x="659" y="417" width="36" height="14.500" fill="#c30008" />
    <text x="693" y="427" textAnchor="end" fill="#fff">-5%</text>
    <rect x="1189.500" y="411.500" width="88" height="10" fill="#12ee18" stroke="#1b7a1e" />
    <text x="1192" y="421" fill="#123f13">Profit Target 297</text>
    <rect x="1197" y="422" width="81" height="9.500" fill="#c30008" />
    <text x="1200" y="430" fill="#500004">Max Loss</text>
    <rect x="1240" y="417.500" width="38" height="14" fill="#c80008" />
    <text x="1241" y="427" fill="#fff">-150</text>

    <rect x="702.500" y="199" width="135" height="44" rx="4" fill="#eaf0f3" fillOpacity=".88" stroke="#888" />
    <rect x="708" y="205" width="3.500" height="12" fill="#97ee97" />
    <rect x="708" y="217" width="3.500" height="20" fill="#7a9fe0" />
    <g fill="#555">
      <text x="711" y="213.500">27,137.60 Realized PnL</text>
      <text x="711" y="225">+4 <tspan fill={INDIGO}>02Dec 6775 Call Δ</tspan></text>
      <text x="711" y="236">-4 <tspan fill={RED}>28Nov 6770 Call Δ</tspan></text>
    </g>
    <text x="831" y="225" textAnchor="end" fill={INDIGO}>46.82</text>
    <text x="831" y="236" textAnchor="end" fill={RED}>46.84</text>

    <rect x="702.500" y="440.500" width="69" height="33" rx="4" fill="#eaf0f3" fillOpacity=".85" stroke="#888" />
    <text x="709" y="455.500" fill="#8286cf">11/28/2025 (0)</text>
    <text x="709" y="467" fill="#aab6ea">11/7/2025 (21)</text>

    <rect x="658.500" y="494.500" width="617" height="146" rx="5" fill="#e8f0f4" stroke="#8a9095" />
    {greeks.map((g) => (
      <g key={g.name}>
        <g fill="#666" textAnchor="middle" fontSize="10">
          <text x="679" y={g.base + 4}>{g.name}</text>
          <text x="1258" y={g.base + 4}>{g.name}</text>
        </g>
        {g.bars.map((h, i) => (
          <rect
            key={i}
            x={edges[i]}
            y={h < 0 ? g.base + h : g.base}
            width={edges[i + 1] - edges[i]}
            height={Math.abs(h)}
            fill={h < 0 ? "#6474ee" : "#e8677c"}
            stroke="#666"
            strokeWidth=".8"
          />
        ))}
        <path d={`M699 ${g.base}H1236`} stroke="#555" />
        <g textAnchor="middle">
          {g.text.map((t, i) => {
            const negative = t.startsWith("-");
            return (
              <text key={i} x={px(strikesX[i])} y={negative ? g.base - 0.5 : g.base + 8.5} fill={negative ? RED : INDIGO}>{t}</text>
            );
          })}
        </g>
      </g>
    ))}
    <g textAnchor="middle" fill={RED}>
      {pnlPct.map((t, i) => <text key={i} x={px(strikesX[i])} y="507.500">{t}</text>)}
    </g>
    <g fill={INDIGO}>
      <text x="944" y="558.500">0</text>
      <text x="940" y="609.500">10</text>
      <text x="940" y="635">23</text>
    </g>

    <rect x="947.500" y="481.500" width="39" height="158.500" rx="5" fill="#edf2f6" fillOpacity=".93" stroke="#70767c" />
    <g textAnchor="middle">
      <text x="967" y="491" fill="#333">6728.80</text>
      <g fill="#d9203c">
        <text x="967" y="517">-150</text>
        <text x="967" y="529">-5.2%</text>
        <text x="967" y="554.500">-0.06</text>
        <text x="967" y="580">-0.03</text>
      </g>
      <g fill="#3a3ae0">
        <text x="967" y="605">105.27</text>
        <text x="967" y="630.500">233.70</text>
      </g>
    </g>
  </Chart>
);

/* ---------- page ---------- */

const windowButtons: [string, string, boolean?][] = [
  ["list", "Watchlist"], ["risk", "Risk Chart"], ["chain", "Option Chain"], ["grid", "Monitor Grid"], ["cal", "Earnings", true],
  ["sigma", "Analysis"], ["price", "Price Chart"], ["orders", "Orders", true], ["eye", "Monitor Dock"], ["rss", "RSS Feed"],
];

const analysisHeads = ["Analysis", "Margin", "Cost", "Curr Cost", "Commissi...", "PnL", "PnL%", "Delta", "Gamma", "Theta", "Vega", "T/D", "Plot"];
const positionCells = ["2,865.20", "-1,970.40", "1,820.00", "10.40", "-150.40", "-5.25%", "-0.06", "-0.03", "105.27", "233.70", "1754.5"];
const modelCells = ["", "", "", "", "", "", "0.00", "0.00", "0.00", "0.00", "0"];

export default function App() {
  return (
    <Screen>
      <GlobalStyle />
      <Window>
        <Ribbon>
          <RibbonGroup $w={83}>
            <BigButtons>
              <BigButton><GearsIcon />Settings</BigButton>
              <BigButton><ImportIcon />Import</BigButton>
            </BigButtons>
            <GroupCaption>Accounts</GroupCaption>
          </RibbonGroup>
          <RibbonGroup $w={57}>
            <BigButtons><BigButton><BarsIcon />Reports</BigButton></BigButtons>
            <GroupCaption>Reports</GroupCaption>
          </RibbonGroup>
          <RibbonGroup $w={117}>
            <BigButtons>
              <BigButton><LogIcon />Trade Log</BigButton>
              <BigButton><LogIcon plus />Commit Trade</BigButton>
            </BigButtons>
            <GroupCaption>Trade Log</GroupCaption>
          </RibbonGroup>
          <RibbonGroup $w={215}>
            <DateArea>
              <DateRow>
                <DateInput aria-label="Trading date" defaultValue="Fri 07 Nov 2025 16:10" />
                <DateButton $w={16} aria-label="Pick date"><CalendarIcon /></DateButton>
                <DateButton $w={16} aria-label="Step">
                  <svg width="9" height="9" viewBox="0 0 9 9" stroke="#999"><path d="M2.500 0v9M6.500 0v9M1 3h1.500M6.500 6H8" /></svg>
                </DateButton>
                <DateButton $w={19}>Exp</DateButton>
                <DateButton $w={21}>LIVE</DateButton>
              </DateRow>
              <StepRow>
                <StepButton aria-label="Back"><DoubleArrow /></StepButton>
                {["5m-", "1Hr-", "Day-", "Day+", "1Hr+", "5m+"].map((s) => (
                  <StepButton key={s}>{s}</StepButton>
                ))}
                <StepButton aria-label="Forward"><DoubleArrow right /></StepButton>
              </StepRow>
            </DateArea>
            <GroupCaption>Trading Date &amp; Time</GroupCaption>
          </RibbonGroup>
          <RibbonGroup $w={354}>
            <WindowGrid>
              {windowButtons.map(([icon, name, off]) => (
                <WindowButton key={name} disabled={off}>
                  {icon === "cal" ? <CalendarIcon muted /> : <WinIcon kind={icon} />}
                  {name}
                </WindowButton>
              ))}
            </WindowGrid>
            <GroupCaption>Windows</GroupCaption>
            <Launcher aria-label="More windows">
              <svg width="7" height="7" viewBox="0 0 7 7" fill="none" stroke="#888"><path d="M.5 6V.5H6M2.500 2.500l4 4M6.500 3v3.500H3" /></svg>
            </Launcher>
          </RibbonGroup>
          <RibbonGroup $w={142}>
            <PlaybackRow>
              <BigButton><PlayIcon />Play</BigButton>
              <PlaybackFields>
                <FieldRow>
                  <Label htmlFor="Interval">Interval</Label>
                  <Select id="Interval" w={38} value="5m" />
                </FieldRow>
                <FieldRow>
                  <Label htmlFor="speed">Speed</Label>
                  <SpeedTrack>
                    <svg width="58" height="11" viewBox="0 0 58 11" fill="none" stroke="#4a9bd0">
                      <path d="M1 5.500h7" strokeWidth="2" />
                      <path d="M12 5.500h34" strokeWidth="2" />
                      <path d="M28.500 2v7" strokeWidth="2" />
                      <rect x="34.500" y="1.500" width="4" height="8" fill="#e2f0fa" />
                      <path d="M54 2v7M50.500 5.500h7" strokeWidth="2.600" />
                      <path d="M54 4v3M52.500 5.500h3" stroke="#e2f0fa" />
                    </svg>
                    <HiddenRange id="speed" type="range" />
                  </SpeedTrack>
                </FieldRow>
              </PlaybackFields>
            </PlaybackRow>
            <GroupCaption>Playback</GroupCaption>
          </RibbonGroup>
          <Brand>
            <LogoIcon />
            <BrandText>
              <BrandName>Option<b>NET</b></BrandName>
              <BrandSub>EXPLORER</BrandSub>
              <BrandVersion>v2.0.89 BETA 8/9/2025</BrandVersion>
            </BrandText>
          </Brand>
        </Ribbon>

        <TabBar>
          <DocTab $w={84} $active>
            Analysis: SPX
            <svg width="7" height="7" viewBox="0 0 7 7" stroke="#fff" strokeWidth="1.600"><path d="m1 1 5 5M6 1 1 6" /></svg>
          </DocTab>
          <DocTab $w={84}>Analysis: SPX</DocTab>
          <DocTab $w={83}>Analysis: SPX</DocTab>
          <DocTab $w={151}>Monitor Grid (1 Open Positions)</DocTab>
          <DocTab $w={154}>Monitor Dock (1 Open Positions)</DocTab>
          <DocTab $w={62}>Reports</DocTab>
          <Account>
            <a href="#accounts">Account: [All Accounts]</a>
            <StatusDot />
            <button aria-label="Account menu"><TriIcon dir="down" fill="#2585c9" /></button>
          </Account>
        </TabBar>

        <Main>
          <LeftPane>
            <Bar $h={18}>
              <Label htmlFor="Symbol">Symbol</Label>
              <Select id="Symbol" w={52} ml={5} value="SPX" />
              <Label $ml={5} htmlFor="Open Position">Open Position (2)</Label>
              <Select id="Open Position" w={138} ml={4} value="#1069 SPX 23-day Narrow Cal" />
              <Push>
                <CommitButton disabled><WinIcon kind="orders" />Commit</CommitButton>
                <button aria-label="Search"><SearchIcon /></button>
                <button aria-label="Swap"><SwapIcon /></button>
                <button aria-label="Close position"><CloseIcon /></button>
                <GearButton aria-label="Options"><GearIcon /></GearButton>
              </Push>
            </Bar>
            <QuoteRow>
              <QuoteTable
                widths={[38, 37, 37, 41, 43, 38, 31, 35, 35, 35, 43]}
                heads={["Open", "High", "Low", "Last", "Chg", "Chg%", "IV", "IV Chg", "Model", "SD", "Position"]}
                cells={["6696....", "6730....", "6631....", "6728.80", "+8.48", "+0.1...", "14.77", "-13%", "", "0.14", ""]}
              />
              <QuoteTable
                widths={[42, 42, 42, 43, 43]}
                heads={["DIT", "SD", "IVChg%", "CurrMa...", "PnL%"]}
                cells={["2", "-1.34", "13.44%", "2,865.20", "-5.25%"]}
              />
            </QuoteRow>
            <Grip $h={10}><Dots /></Grip>
            <OptionChain name="CALLS" strikes={callStrikes} groups={calls} hot={5} height={190} titled thumb={32} />
            <Grip $h={10}><Dots /></Grip>
            <OptionChain name="PUTS" strikes={putStrikes} groups={puts} height={180} thumb={34} />
            <Grip $h={10}><Dots /></Grip>
            <Bar $h={18}>
              <Label htmlFor="Trade Analysis">Trade Analysis</Label>
              <Select id="Trade Analysis" w={118} ml={6} value="Combined" />
              <Select id="Mode" w={64} ml={7} value="Auto" />
              <Push>
                <CheckLabel><Check type="checkbox" />Ignore Today's Trades</CheckLabel>
              </Push>
            </Bar>
            <AnalysisBox>
              <Table>
                <colgroup>
                  {analysisHeads.map((h) => (
                    <col key={h} style={{ width: h === "Plot" ? 55 : 48 }} />
                  ))}
                </colgroup>
                <thead>
                  <tr>{analysisHeads.map((h) => <Th key={h}>{h}</Th>)}</tr>
                </thead>
                <tbody>
                  <tr>
                    <Td $tone="#2585c9"><NameCell><PlusBox />Position</NameCell></Td>
                    {positionCells.map((c, i) => (
                      <Td key={i} $tone={i === 4 || i === 5 ? "#e01238" : undefined}>{c}</Td>
                    ))}
                    <Td $center><Check type="checkbox" defaultChecked aria-label="Plot position" /></Td>
                  </tr>
                  <tr>
                    <Td $tone="#27a22f"><NameCell $dim><PlusBox />Model</NameCell></Td>
                    {modelCells.map((c, i) => <Td key={i}>{c}</Td>)}
                    <Td $center><Check type="checkbox" aria-label="Plot model" /></Td>
                  </tr>
                </tbody>
              </Table>
            </AnalysisBox>
            <SideGrip><Dots /></SideGrip>
          </LeftPane>

          <RightPane>
            <PaneTabs>
              <PaneTab $w={57} $active>Risk Chart</PaneTab>
              <PaneTab $w={59}>Price Chart</PaneTab>
              <PaneTab $w={91}>Movement Analysis</PaneTab>
              <PaneTab $w={49}>Volatility</PaneTab>
              <PaneTab $w={115}>Statistics &amp; Fundamentals</PaneTab>
              <TabFill />
            </PaneTabs>
            <PaneBody>
              <Bar $h={19}>
                <Label htmlFor="vol">Vol Adjust</Label>
                <SpinBox $w={42} $ml={3}>
                  <input id="vol" defaultValue="0" />
                  <SpinButtons><Chevron up /><Chevron /></SpinButtons>
                </SpinBox>
                <Label $ml={5} htmlFor="theo">Theo Price</Label>
                <SpinBox $w={64} $ml={3}>
                  <input id="theo" defaultValue="6728.8" />
                  <SpinButtons><Chevron up /><Chevron /></SpinButtons>
                </SpinBox>
                <Push $gap={4}>
                  <Label htmlFor="Projection">Projection</Label>
                  <ProjectionBox>
                    <Select id="Projection" w={72} value="11/7/2025" />
                    <SmallButton $w={27}>T+0</SmallButton>
                    <SmallButton $w={21}>1Ln</SmallButton>
                    <SmallButton $w={12} aria-label="Earlier"><TriIcon dir="left" /></SmallButton>
                    <SmallButton $w={12} aria-label="Later"><TriIcon dir="right" /></SmallButton>
                  </ProjectionBox>
                </Push>
              </Bar>
              <RiskChart />
            </PaneBody>
            <ZoomBar>
              <label htmlFor="zoom">200%</label>
              <button aria-label="Zoom out">−</button>
              <ZoomRange id="zoom" type="range" min="0" max="100" defaultValue="60" />
              <button aria-label="Zoom in">+</button>
            </ZoomBar>
            <Watermark><strong>Activate Windows</strong>Go to Settings to activate Windows.</Watermark>
          </RightPane>
        </Main>
      </Window>
    </Screen>
  );
}
